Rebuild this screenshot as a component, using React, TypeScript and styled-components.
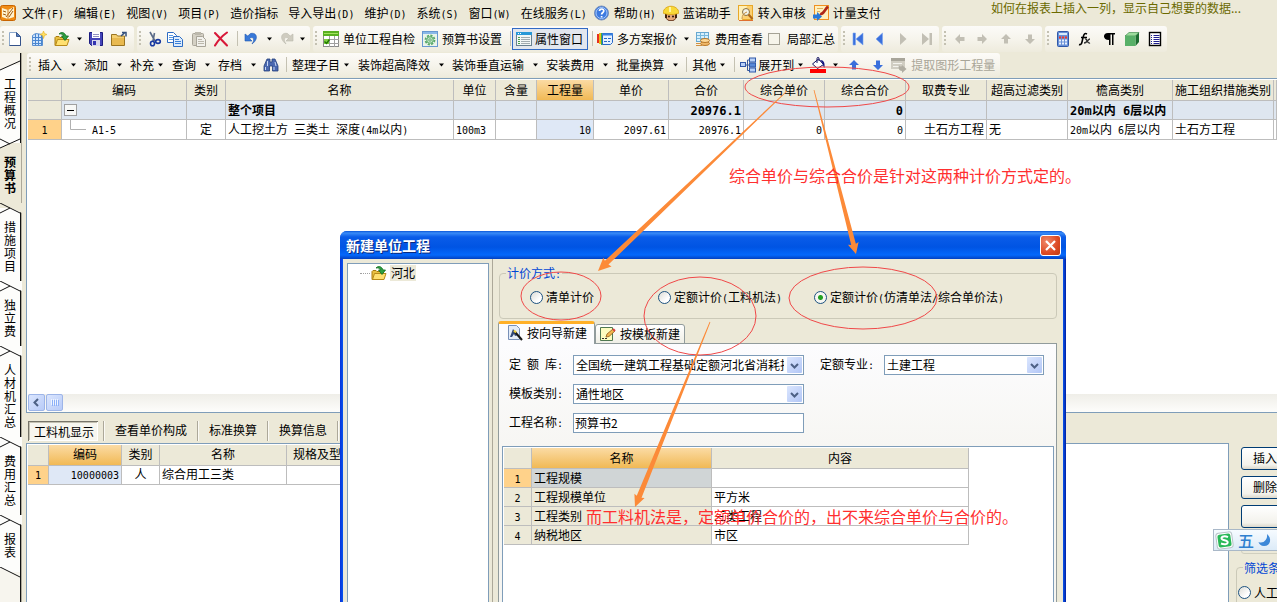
import React from "react";
import styled, { createGlobalStyle, css } from "styled-components";

const face = "#ece9d8";
const line = "#bdbdbd";
const edge = "#7f9db9";
const cjk = '"Noto Sans CJK SC", sans-serif';

const Global = createGlobalStyle`
  *, *::before, *::after { box-sizing: border-box; }
  html, body, #root { height: 100%; }
  body {
    margin: 0;
    overflow: hidden;
    background: ${face};
    color: #000;
    font: 12px/16px ${cjk};
  }
  button, input, select { font: inherit; color: inherit; margin: 0; }
  button { border: 0; background: none; padding: 0; white-space: nowrap; }
  fieldset { margin: 0; padding: 0; min-width: 0; }
`;

/* ---------- text ---------- */

const Latin = styled.span`
  font-family: "DejaVu Sans Mono", monospace;
  font-size: 10px;
  line-height: 10px;
  white-space: pre;
`;

const T = ({ s }: { s: string }) => (
  <span>
    {s.split(/([\x20-\x7e]+)/).map((part, i) => (i % 2 ? <Latin key={i}>{part}</Latin> : part))}
  </span>
);

/* ---------- icons ---------- */

const Svg = styled.svg`
  display: block;
  flex: none;
`;

const Icon = ({ children }: { children: React.ReactNode }) => (
  <Svg width="16" height="16" viewBox="0 0 16 16" fill="none" aria-hidden="true">
    {children}
  </Svg>
);

const AppIcon = () => (
  <Icon>
    <rect x="0.5" y="0.5" width="15" height="15" rx="2" fill="#f08c14" stroke="#c86400" />
    <path d="M2 3 8 5l6-3v10l-6 2-6-2z" fill="#fff3d0" />
    <path d="M3 6l3 1M3 9l3 1M6 12l7-9M9 12l4-6" stroke="#a05a10" />
    <path d="M8 5v9" stroke="#d07a20" />
  </Icon>
);
const NewDoc = () => (
  <Icon>
    <path d="M2.500 1.500h7l4 4v9h-11z" fill="#fff" stroke="#8ca8cc" />
    <path d="M9.500 1.500v4h4z" fill="#5a7fc0" stroke="#3a5a90" />
    <path d="M13.500 6v8.500h-11" stroke="#34528a" />
  </Icon>
);
const Building = () => (
  <Icon>
    <path d="M1.500 4.500l3-2 7 1v11h-10z" fill="#cfe4fb" stroke="#5a8fd0" />
    <path d="M4.500 3v11M7.500 3v11M10.500 4v10M2 6.500h9M2 9.500h9M2 12.500h9" stroke="#4a86d0" />
    <path d="M12.500 0l1 2.500L16 3.500l-2.500 1-1 3-1-3-2.500-1 2.500-1z" fill="#ffe060" stroke="#e8b020" strokeWidth="0.600" />
  </Icon>
);
const OpenFolder = () => (
  <Icon>
    <path d="M1 6.500l1-1h3l1 1h6v3H5l-2 5H1z" fill="#e8c040" stroke="#a87a10" />
    <path d="M3.500 8.500h11.500l-2 6H1.500z" fill="#ffe070" stroke="#b88a18" />
    <path d="M5 3c3-3 6-1 7 2h2.500L11 9.500 7.500 5H9.500C9 3.500 7.500 2.500 5 3z" fill="#2fa040" stroke="#0e6c20" strokeWidth="0.800" />
  </Icon>
);
const Save = () => (
  <Icon>
    <path d="M1.500 1.500h13v13h-11l-2-2z" fill="#4444b8" stroke="#1c1c80" />
    <rect x="4" y="1" width="8" height="6" fill="#fff" />
    <path d="M5 3.500h6M5 5.500h6" stroke="#9090c0" />
    <rect x="4" y="9" width="8" height="6" fill="#d8d8ec" />
    <rect x="5" y="10" width="3" height="4" fill="#3434b0" />
  </Icon>
);
const FolderUp = () => (
  <Icon>
    <path d="M.5 3.500h5l1 1.500h7v9.500H.5z" fill="#f4cf70" stroke="#9a7420" />
    <path d="M1 7h12v7H1z" fill="#e8b950" />
    <path d="M10 5l4-3.500M11 1.500h4v4" stroke="#34507c" strokeWidth="1.500" />
  </Icon>
);
const Cut = () => (
  <Icon>
    <path d="M4 1l5 9M8.500 2L7 10" stroke="#5a6a88" strokeWidth="1.600" />
    <ellipse cx="6.500" cy="12.500" rx="2" ry="2.300" stroke="#1838a0" strokeWidth="1.600" />
    <ellipse cx="12" cy="10.500" rx="2.300" ry="1.900" stroke="#1838a0" strokeWidth="1.600" />
  </Icon>
);
const Copy = () => (
  <Icon>
    <path d="M.5 1.500h6l3 3v7h-9z" fill="#fff" stroke="#2d6cc4" />
    <path d="M2 4.500h4M2 6.500h5M2 8.500h4" stroke="#5a98e0" />
    <path d="M6.500 5.500h6l3 3v7h-9z" fill="#dcebfc" stroke="#2d6cc4" />
    <path d="M8 8.500h4M8 10.500h6M8 12.500h6" stroke="#3a80d8" />
  </Icon>
);
const Paste = () => (
  <Icon>
    <rect x="1.500" y="2.500" width="11" height="12" rx="1" fill="#d4d0c4" stroke="#a8a498" />
    <rect x="4" y="1" width="6" height="3" fill="#bcb8ac" />
    <path d="M5.500 5.500h6l3 3v7h-9z" fill="#f2f1ec" stroke="#a8a498" />
    <path d="M7 8.500h4M7 10.500h6M7 12.500h6" stroke="#bcb8ac" />
  </Icon>
);
const Delete = () => (
  <Icon>
    <path d="M2 2l12 12.500M14 1.500C9 5 5 9.500 2 14.500" stroke="#d81838" strokeWidth="2.100" strokeLinecap="round" />
  </Icon>
);
const Undo = () => (
  <Icon>
    <path d="M2 3v7h7L6.500 7.500C10 5 12.500 8 9 13c7-5 5-12-1.500-10.500L4.800 5z" fill="#3878d8" stroke="#2058b0" strokeWidth="0.600" />
  </Icon>
);
const Redo = () => (
  <Icon>
    <path d="M14 3v7H7l2.500-2.500C6 5 3.500 8 7 13 0 8 2 1 8.500 2.500L11.200 5z" fill="#cfccc0" stroke="#bbb8ac" strokeWidth="0.600" />
  </Icon>
);
const Check = () => (
  <Icon>
    <rect x="0.500" y="0.500" width="15" height="15" fill="#fff" stroke="#8a8a8a" />
    <rect x="0" y="0" width="16" height="5" fill="#58b020" />
    <path d="M1 2.500h14" stroke="#a4e060" />
    <path d="M1 8.500h15M1 12.500h15M6.500 5v11M11.500 5v11" stroke="#a0a0a0" />
    <path d="M1 8h5v5H1z" fill="#80d040" />
    <path d="M1.500 10.500l2 2 3-4" stroke="#207800" strokeWidth="1.400" />
  </Icon>
);
const Gear = () => (
  <Icon>
    <rect x="0.500" y="0.500" width="15" height="15" fill="#eaf4ea" stroke="#6898d0" />
    <path d="M1 2h14" stroke="#8ab8e8" strokeWidth="2" />
    <circle cx="8" cy="9" r="4.500" stroke="#58a868" strokeWidth="1.800" strokeDasharray="2.200 1.300" />
    <circle cx="8" cy="9" r="3.300" fill="#c4e6c8" stroke="#58a868" />
    <circle cx="8" cy="9" r="1.200" fill="#fff" stroke="#58a868" />
  </Icon>
);
const PropWindow = () => (
  <Icon>
    <rect x="0.500" y="1.500" width="15" height="13" fill="#f2f6f6" stroke="#688090" />
    <rect x="0" y="1" width="16" height="3" fill="#2898d8" />
    <path d="M2 2.500h1M4 2.500h1" stroke="#fff" />
    <path d="M2 6.500h2M2 8.500h2M2 10.500h2M2 12.500h2" stroke="#48a048" />
    <path d="M5 6.500h9M5 8.500h9M5 10.500h9M5 12.500h9" stroke="#a0aab0" />
  </Icon>
);
const Quote = () => (
  <Icon>
    <rect x="0" y="3" width="2" height="9" fill="#e83020" />
    <rect x="2" y="2" width="2" height="11" fill="#f0b818" />
    <rect x="4" y="2" width="2" height="12" fill="#38b048" />
    <path d="M5.500 2.500h10v9l-2 2h-8z" fill="#e4f0fe" stroke="#2868c8" />
    <path d="M5 3.500h11" stroke="#3880e0" strokeWidth="2" />
    <path d="M7 7.500h3M11 7.500h3M7 10.500h3M11 10.500h2" stroke="#2868c8" />
  </Icon>
);
const Cost = () => (
  <Icon>
    <rect x="1.500" y="1.500" width="12" height="9" fill="#d8f0fc" stroke="#68a8d0" />
    <path d="M2 4.500h11M2 7.500h11M5.500 2v8M9.500 2v8" stroke="#78b8dc" />
    <ellipse cx="10" cy="12.500" rx="4.500" ry="2" fill="#f0b868" stroke="#b87828" />
    <ellipse cx="10" cy="9.500" rx="4.500" ry="2" fill="#fcd898" stroke="#b87828" />
    <path d="M1 12.500h4M1 14.500h6" stroke="#d09040" />
  </Icon>
);
const blueFill = "#3a6fdc";
const greyFill = "#c2bfb4";
const First = () => (
  <Icon>
    <path d="M3 2h2.500v12H3zM13 2v12L6 8z" fill={blueFill} stroke="#7aa4f0" strokeWidth="0.600" />
  </Icon>
);
const Prev = () => (
  <Icon>
    <path d="M11.500 2v12L5 8z" fill={blueFill} stroke="#7aa4f0" strokeWidth="0.600" />
  </Icon>
);
const Next = () => (
  <Icon>
    <path d="M5 2v12l6.500-6z" fill={greyFill} />
  </Icon>
);
const Last = () => (
  <Icon>
    <path d="M3 2v12l7-6zM10.500 2H13v12h-2.500z" fill={greyFill} />
  </Icon>
);
const Arrow = ({ turn, fill = greyFill }: { turn: number; fill?: string }) => (
  <Icon>
    <path transform={`rotate(${turn} 8 8)`} d="M8 3l5 5h-3v4.500H6V8H3z" fill={fill} />
  </Icon>
);
const Calculator = () => (
  <Icon>
    <rect x="2.500" y="0.500" width="11" height="15" rx="1" fill="#6890d8" stroke="#3058a8" />
    <rect x="4" y="2" width="8" height="2" fill="#d8ecfc" />
    <path d="M4 6.500h2M7 6.500h2M10 6.500h2" stroke="#f03828" strokeWidth="2" />
    <path d="M4 9.500h2M7 9.500h2M10 9.500h2M4 12.500h2M7 12.500h2M10 12.500h2" stroke="#e8f0fc" strokeWidth="2" />
  </Icon>
);
const Fx = () => (
  <Icon>
    <path d="M2 13.500c3 1 3-3 4-7s2-4.500 4-3.500M4 6.500h6" stroke="#000" strokeWidth="1.600" />
    <path d="M8 8c2-1 2 5 5 4M13 8c-2 0-3 4-6 4" stroke="#303030" strokeWidth="1.400" />
  </Icon>
);
const Pilcrow = () => (
  <Icon>
    <path d="M7 2h7v1.500h-1.500V14H11V3.500H9.500V14H8V9C1.500 9 1.500 2 7 2z" fill="#000" />
  </Icon>
);
const Cube = () => (
  <Icon>
    <path d="M1 5l4-3.500h10L11.500 5z" fill="#9cdc9c" stroke="#308040" strokeWidth="0.600" />
    <path d="M11.500 5L15 1.500V11l-3.500 4z" fill="#1c6c30" />
    <rect x="1" y="5" width="10.500" height="10" fill="#58b068" />
  </Icon>
);
const Report = () => (
  <Icon>
    <rect x="2.500" y="1.500" width="11" height="13" fill="#fff" stroke="#000" strokeWidth="1.400" />
    <path d="M4 4.500h1M6.500 4.500h6M4 6.500h1M6.500 6.500h6M4 8.500h1M6.500 8.500h6M4 10.500h1M6.500 10.500h6M4 12.500h1M6.500 12.500h6" stroke="#202090" />
  </Icon>
);
const Binoculars = () => (
  <Icon>
    <path d="M4 2h3v3h2V2h3l3 7v5H9.500V9h-3v5H1V9z" fill="#4a68b0" stroke="#24407c" strokeWidth="0.800" />
    <path d="M2.500 10v3M4.500 4v5M11 10v3M12 5l1 4" stroke="#c8d8f4" />
  </Icon>
);
const Tree = () => (
  <Icon>
    <path d="M5 8h4M7.500 3v10.500M7.500 3H10M7.500 13.500H10" stroke="#385898" />
    <rect x="0.500" y="5.500" width="5" height="4" fill="#b8d0f8" stroke="#3058a8" />
    <rect x="9.500" y="1" width="6" height="4" fill="#b8d0f8" stroke="#3058a8" />
    <rect x="9.500" y="6" width="6" height="4" fill="#5888d8" stroke="#3058a8" />
    <rect x="9.500" y="11" width="6" height="4" fill="#b8d0f8" stroke="#3058a8" />
  </Icon>
);
const Paint = () => (
  <Icon>
    <path d="M2.500 7l6-5 5 5.500-6 4z" fill="#fff" stroke="#101060" />
    <path d="M7 6V1.500c0-1.500 2-1.500 2 0V4" stroke="#101060" />
    <path d="M10 3c4 0 5 3 4.500 8C13 10 13.500 8 12.500 6z" fill="#101080" />
    <rect x="0" y="12" width="16" height="4" fill="#f00" />
  </Icon>
);
const Extract = () => (
  <Icon>
    <rect x="0" y="1" width="14" height="11" fill="#d0cdc2" />
    <rect x="0" y="1" width="14" height="3" fill="#a8a59a" />
    <path d="M2 6.500h9M2 9.500h7" stroke="#f4f3ee" />
    <path d="M8 8c1 2 3 2 3 0l4.500 4L11 16v-2c-3 0-4-3-3-6z" fill="#b0ada2" />
  </Icon>
);
const Help = () => (
  <Icon>
    <circle cx="7.500" cy="8" r="7" fill="#3c7ae0" stroke="#7890b8" />
    <circle cx="7.500" cy="8" r="5.500" stroke="#a8c8f8" />
    <path d="M5.500 6c0-2.800 4.500-2.500 4.300 0C9.700 7.500 7.600 7.600 7.600 9.500M7.600 11v1.500" stroke="#fff" strokeWidth="1.700" />
  </Icon>
);
const Helper = () => (
  <Icon>
    <path d="M3 8h10v4c0 5-10 5-10 0z" fill="#e8a878" stroke="#603018" />
    <path d="M3 8v5M13 8v5" stroke="#402010" strokeWidth="2" />
    <path d="M0 8C1-1 15-1 16 8c-4 2-12 2-16 0z" fill="#f8d838" stroke="#d8a010" strokeWidth="0.800" />
    <path d="M7 2v5" stroke="#fff4a0" strokeWidth="2" />
    <circle cx="6" cy="11.500" r="1" fill="#201008" />
    <circle cx="10" cy="11.500" r="1" fill="#201008" />
  </Icon>
);
const Review = () => (
  <Icon>
    <rect x="0.500" y="0.500" width="14" height="14" fill="#fcd070" stroke="#e8a828" />
    <path d="M1 1h8L4 15H1z" fill="#fff0b8" />
    <circle cx="8" cy="7" r="3.500" fill="#f4f4e8" stroke="#887040" />
    <path d="M10.500 9.500l4 4.500" stroke="#b06818" strokeWidth="2.200" />
    <path d="M4 14c0-4 2-6 5-7" stroke="#c89040" />
    <path d="M1 15.500h14" stroke="#e07030" />
  </Icon>
);
const Payment = () => (
  <Icon>
    <rect x="1.500" y="0.500" width="14" height="14" fill="#fff0bc" stroke="#f09020" />
    <path d="M4 3.500h6M4 6.500h3" stroke="#e0b060" />
    <path d="M7 8.500c3 2 4-3 8-7" stroke="#b02818" strokeWidth="2.600" />
    <path d="M0 9.500h4V7l5 4.500L4 16v-2.500H0z" fill="#2878d8" />
  </Icon>
);
const Wizard = () => (
  <Icon>
    <path d="M1.500.5h8l3 3v11h-11z" fill="#e4ecf8" stroke="#7890b8" />
    <path d="M3 12l3-8 5 6-3 1-1-2-2 3z" fill="#304878" />
    <path d="M8 7l7 8" stroke="#181818" strokeWidth="2" />
    <path d="M7 5.500l2 2" stroke="#f0d040" strokeWidth="2" />
  </Icon>
);
const Template = () => (
  <Icon>
    <path d="M.5 1.500h12v13H.5z" fill="#fcfcc0" stroke="#507850" />
    <path d="M2 12.500h2M5 12.500h2" stroke="#303030" />
    <path d="M6 11l1-3 6-5 2 2-6 5.500z" fill="#f0b850" stroke="#905818" strokeWidth="0.800" />
    <path d="M13 3l2 2" stroke="#d84040" strokeWidth="2" />
  </Icon>
);

/* ---------- menu bar ---------- */

const Shell = styled.div`
  position: relative;
  display: flex;
  flex-direction: column;
  height: 100vh;
  overflow: hidden;
`;

const MenuBar = styled.nav`
  display: flex;
  align-items: center;
  flex: none;
  gap: 10px;
  height: 26px;
  padding-bottom: 1px;
  white-space: nowrap;
`;

const MenuItem = styled.button<{ $icon?: boolean }>`
  display: flex;
  align-items: center;
  gap: 4px;
  margin-left: ${(p) => (p.$icon ? -3 : 0)}px;
`;

const Logo = styled.span`
  margin-right: -4px;
`;

const Notice = styled.a`
  align-self: flex-start;
  margin: 0 36px 0 auto;
  color: #6b6a00;
  text-decoration: none;
`;

const menus: { label: string; icon?: React.ReactNode }[] = [
  { label: "文件(F)" },
  { label: "编辑(E)" },
  { label: "视图(V)" },
  { label: "项目(P)" },
  { label: "造价指标" },
  { label: "导入导出(D)" },
  { label: "维护(D)" },
  { label: "系统(S)" },
  { label: "窗口(W)" },
  { label: "在线服务(L)" },
  { label: "帮助(H)", icon: <Help /> },
  { label: "蓝诺助手", icon: <Helper /> },
  { label: "转入审核", icon: <Review /> },
  { label: "计量支付", icon: <Payment /> },
];

/* ---------- toolbars ---------- */

const ToolRow = styled.div`
  display: flex;
  flex: none;
  gap: 3px;
  height: 27px;
  white-space: nowrap;
`;

const ToolGroup = styled.div`
  display: flex;
  align-items: center;
  flex: none;
  height: 26px;
  padding-bottom: 1px;
  border-radius: 3px;
  background: linear-gradient(#fcfbf8, #f6f4ec 50%, #eeebdd);
`;

const Handle = styled.i<{ $w?: number }>`
  flex: none;
  width: ${(p) => p.$w ?? 8}px;
  height: 16px;
  background: linear-gradient(#c4c1b2, #c4c1b2) 2px 0 / 2px 2px no-repeat,
    linear-gradient(#c4c1b2, #c4c1b2) 2px 4px / 2px 2px no-repeat,
    linear-gradient(#c4c1b2, #c4c1b2) 2px 8px / 2px 2px no-repeat,
    linear-gradient(#c4c1b2, #c4c1b2) 2px 12px / 2px 2px no-repeat;
`;

const Slot = styled.button<{ $w: number }>`
  display: flex;
  flex: none;
  align-items: center;
  justify-content: center;
  width: ${(p) => p.$w}px;
  height: 22px;
`;

const Rule = styled.i<{ $w: number }>`
  display: flex;
  flex: none;
  justify-content: center;
  width: ${(p) => p.$w}px;
  height: 15px;
  &::before {
    content: "";
    width: 1px;
    background: #c4c1b2;
  }
`;

const Labelled = styled.button<{ $after?: number; $active?: boolean; $dim?: boolean }>`
  display: flex;
  flex: none;
  align-items: center;
  gap: 4px;
  height: 22px;
  margin-right: ${(p) => p.$after ?? 0}px;
  ${(p) => p.$dim && "color: #a9a698;"}
  ${(p) =>
    p.$active &&
    css`
      gap: 3px;
      padding: 0 4px 0 3px;
      border: 1px solid #316ac5;
      background: #e2e6ee;
    `}
`;

const CheckLabel = styled.label`
  display: flex;
  align-items: center;
  gap: 7px;
  padding-right: 3px;
  input {
    appearance: none;
    width: 12px;
    height: 12px;
    border: 1px solid #a5a295;
    background: #f6f4ea;
  }
`;

const Caret = () => (
  <Svg width="7" height="4" viewBox="0 0 7 4" aria-hidden="true">
    <path d="M1 0.500h5L3.500 3.500z" fill="currentColor" />
  </Svg>
);

const DropText = styled.button<{ $tight?: boolean; $after?: number }>`
  display: flex;
  flex: none;
  align-items: center;
  height: 22px;
  padding-right: ${(p) => p.$after ?? (p.$tight ? 8 : 7)}px;
  svg:last-child {
    margin-left: ${(p) => (p.$tight ? 3 : 8)}px;
  }
  svg + span {
    margin-left: 2px;
  }
`;

/* ---------- body ---------- */

const Body = styled.div`
  display: flex;
  flex: 1;
  min-height: 0;
`;

const Side = styled.nav`
  flex: none;
  width: 26px;
  padding-top: 12px;
  background: linear-gradient(90deg, #f7f5ee 20px, #111 20px, #111 21px, #aca899 21px, #aca899 22px, ${face} 22px);
`;

const SideTab = styled.button<{ $on?: boolean }>`
  position: relative;
  display: block;
  width: ${(p) => (p.$on ? 21 : 20)}px;
  padding: 12px 4px 14px;
  text-align: left;
  line-height: 13px;
  font-weight: ${(p) => (p.$on ? 700 : 400)};
  background: ${(p) => (p.$on ? face : "#fdfdfb")};
  span {
    display: block;
    width: 12px;
    white-space: normal;
    word-break: break-all;
  }
`;

const Notch = styled.svg`
  position: absolute;
  left: 0;
  top: -5px;
  z-index: 1;
`;

const SideEnd = styled.div`
  position: relative;
`;

const sideTabs = ["工程概况", "预算书", "措施项目", "独立费", "人材机汇总", "费用汇总", "报表"];

const Main = styled.main`
  display: flex;
  flex: 1;
  flex-direction: column;
  min-width: 0;
`;

const SubTools = styled(ToolRow)`
  height: 25px;
  padding-left: 1px;
  ${ToolGroup} {
    height: 24px;
  }
`;

const UpperPane = styled.section`
  display: flex;
  flex: 334 1 0;
  flex-direction: column;
  min-height: 0;
  padding: 1px 0 0 1px;
  border: solid ${edge};
  border-width: 1px 0 1px 1px;
  background: #fff;
`;

const Sheet = styled.table`
  table-layout: fixed;
  border-spacing: 0;
  white-space: nowrap;
`;

const FullSheet = styled(Sheet)`
  width: 100%;
`;

const cell = css`
  height: 19px;
  padding: 0 2px 1px;
  overflow: hidden;
  border: solid ${line};
  border-width: 0 1px 1px 0;
  line-height: 16px;
`;

const orange = "linear-gradient(#fbdba4, #f1b955)";

const Th = styled.th<{ $hot?: boolean }>`
  ${cell}
  height: 21px;
  padding: 0 0 1px;
  font-weight: 400;
  text-align: center;
  background: ${(p) => (p.$hot ? orange : face)};
`;

const RowNo = styled.th<{ $hot?: boolean }>`
  ${cell}
  font-weight: 400;
  text-align: center;
  background: ${(p) => (p.$hot ? "#ffd28a" : face)};
`;

const Td = styled.td<{ $align?: "right" | "center"; $bg?: string }>`
  ${cell}
  text-align: ${(p) => p.$align ?? "left"};
  background: ${(p) => p.$bg ?? "#fff"};
`;

const TotalRow = styled.tr`
  font-weight: 700;
  td {
    background: #dee6f0;
  }
  ${Latin} {
    font-size: 12px;
    line-height: 12px;
  }
`;

const TreeCell = styled.div`
  display: flex;
  align-items: center;
  gap: 6px;
`;

const upperCols: [string, number][] = [
  ["", 34],
  ["编码", 125],
  ["类别", 39],
  ["名称", 228],
  ["单位", 42],
  ["含量", 41],
  ["工程量", 57],
  ["单价", 75],
  ["合价", 75],
  ["综合单价", 81],
  ["综合合价", 81],
  ["取费专业", 81],
  ["超高过滤类别", 81],
  ["檐高类别", 105],
  ["施工组织措施类别", 101],
];

const ScrollTrack = styled.div`
  display: flex;
  gap: 1px;
  height: 18px;
  margin-top: auto;
  background: linear-gradient(#efeee8, #fdfdfb);
`;

const ScrollPiece = styled.button`
  display: grid;
  place-items: center;
  width: 17px;
  height: 17px;
  border: 1px solid #9db5e8;
  border-radius: 2px;
  background: linear-gradient(135deg, #dbe6fe, #b8cbf8);
`;

const TabStrip = styled.div`
  display: flex;
  flex: none;
  align-items: flex-end;
  height: 30px;
  padding: 0 0 2px 2px;
`;

const StripTab = styled.button<{ $on?: boolean }>`
  height: 20px;
  padding: 0 10px 2px;
  ${(p) =>
    p.$on &&
    css`
      padding: 1px 4px 0 5px;
      margin-right: 5px;
      border: solid #77756a;
      border-width: 1px 0 0 1px;
      background: #f7f6ef;
      box-shadow: inset -1px -1px #fff, inset 1px 1px #c4c1b2;
    `}
`;

const StripRule = styled.i`
  width: 2px;
  height: 20px;
  border-left: 1px solid #aca899;
  border-right: 1px solid #fbfaf4;
`;

const LowerArea = styled.section`
  display: flex;
  flex: 160 1 0;
  min-height: 0;
`;

const LowerGrid = styled.div`
  flex: 1;
  min-width: 0;
  padding: 1px 0 0 1px;
  border: solid ${edge};
  border-width: 1px 1px 0 1px;
  background: #fff;
`;

const Actions = styled.aside`
  display: flex;
  flex: none;
  flex-direction: column;
  gap: 6px;
  width: 48px;
  padding: 4px 0 0 12px;
  overflow: hidden;
`;

const XpButton = styled.button`
  flex: none;
  width: 75px;
  height: 23px;
  padding-left: 11px;
  text-align: left;
  border: 1px solid #003c74;
  border-radius: 3px;
  background: linear-gradient(#fff, #f3f2ec 80%, #dcd8cb);
`;

const ButtonFrame = styled.div`
  flex: none;
  width: 75px;
  height: 20px;
  border: 1px solid #d0cfbf;
  border-radius: 3px;
`;

const Group = styled.fieldset`
  border: 1px solid #cbc9b8;
  border-radius: 4px;
  legend {
    height: 16px;
    margin-left: 6px;
    padding: 0 1px;
    color: #0046d5;
  }
`;

const FilterGroup = styled(Group)`
  flex: none;
  width: 90px;
  margin-left: -5px;
  white-space: nowrap;
  label {
    margin: 9px 0 20px 1px;
  }
`;

const RadioLabel = styled.label`
  display: flex;
  align-items: center;
  gap: 3px;
`;

const Radio = styled.input.attrs({ type: "radio" })`
  appearance: none;
  flex: none;
  width: 13px;
  height: 13px;
  border: 1px solid #1d5281;
  border-radius: 50%;
  background: linear-gradient(135deg, #dcdcd6, #fff 70%);
  &:checked {
    background: radial-gradient(circle, #21a121 2px, #f6f6f2 3px);
  }
`;

/* ---------- dialog ---------- */

const Dialog = styled.section`
  position: absolute;
  left: 340px;
  top: 231px;
  bottom: -4px;
  display: flex;
  flex-direction: column;
  width: 726px;
  padding: 0 3px;
  border-radius: 7px 7px 0 0;
  background: linear-gradient(90deg, #0831d9, #0855ee 3px, #0855ee 723px, #001ea0);
`;

const TitleBar = styled.header`
  display: flex;
  flex: none;
  align-items: center;
  justify-content: space-between;
  height: 28px;
  margin: 0 -3px;
  padding: 0 5px 0 6px;
  border-radius: 7px 7px 0 0;
  background: linear-gradient(#0a55d8, #3a8cf8 2px, #0a5ce8 6px, #0054e3 16px, #0468fb 24px, #0340c0);
  color: #fff;
  h1 {
    margin: 0;
    font-size: 14px;
    line-height: 18px;
    text-shadow: 1px 1px #0a2a80;
  }
`;

const Close = styled.button`
  display: grid;
  place-items: center;
  width: 21px;
  height: 21px;
  border: 1px solid #fff;
  border-radius: 3px;
  background: radial-gradient(circle at 30% 30%, #f0886a, #dc4a24 60%, #c03a10);
`;

const DialogBody = styled.div`
  display: flex;
  flex: 1;
  min-height: 0;
  background: ${face};
`;

const TreeBox = styled.div`
  flex: none;
  width: 142px;
  margin: 4px 3px 0 4px;
  border: 1px solid ${edge};
  background: #fff;
`;

const TreeNode = styled.div`
  display: flex;
  align-items: center;
  margin-top: 1px;
  padding-left: 12px;
  &::before {
    content: "";
    width: 10px;
    margin-right: 1px;
    border-top: 1px dotted #a0a0a0;
  }
  span {
    margin-left: 3px;
    padding: 0 1px;
    background: ${face};
  }
`;

const Right = styled.div`
  display: flex;
  flex: 1;
  flex-direction: column;
  min-width: 0;
  padding: 6px 6px 0 5px;
  border-left: 1px solid #aca899;
`;

const Pricing = styled(Group)`
  flex: none;
  height: 54px;
  margin-left: 1px;
`;

const Choices = styled.div`
  display: grid;
  grid-template-columns: 128px 156px auto;
  padding: 8px 0 0 30px;
  white-space: nowrap;
`;

const Tabs = styled.div`
  display: flex;
  flex: none;
  align-items: flex-end;
  height: 25px;
  margin-bottom: -1px;
`;

const Tab = styled.button<{ $on?: boolean }>`
  display: flex;
  align-items: center;
  gap: 4px;
  height: 20px;
  padding: 0 4px;
  border: 1px solid #919b9c;
  border-radius: 3px 3px 0 0;
  background: linear-gradient(#fff, #f0efe6);
  ${(p) =>
    p.$on &&
    css`
      z-index: 1;
      height: 23px;
      padding: 0 7px 2px 8px;
      border-top: 3px solid #ffb028;
      border-bottom: 0;
      background: #fcfcfe;
    `}
`;

const Pane = styled.div`
  display: flex;
  flex: 1;
  flex-direction: column;
  padding: 11px 2px 0 3px;
  border: 1px solid #919b9c;
  background: linear-gradient(#fcfcfe, #f6f5f1 120px);
`;

const Form = styled.form`
  display: flex;
  flex-direction: column;
  gap: 9px;
  margin: 0 0 13px 7px;
`;

const FormRow = styled.div`
  display: flex;
  align-items: center;
  height: 20px;
`;

const FormLabel = styled.label<{ $gap?: number }>`
  flex: none;
  width: 64px;
  margin-left: ${(p) => p.$gap ?? 0}px;
  padding-bottom: 2px;
  white-space: pre;
`;

const field = css`
  display: block;
  width: 100%;
  height: 20px;
  border: 1px solid ${edge};
  border-radius: 0;
  background: #fff;
  outline: 0;
  line-height: 18px;
`;

const Field = styled.div<{ $w: number }>`
  position: relative;
  width: ${(p) => p.$w}px;
`;

const Select = styled.select`
  ${field}
  appearance: none;
  padding: 0 19px 0 2px;
`;

const Input = styled.input`
  ${field}
  padding: 0 1px 2px;
`;

const Drop = styled.span`
  position: absolute;
  top: 2px;
  right: 2px;
  display: grid;
  place-items: center;
  width: 15px;
  height: 16px;
  border-radius: 1px;
  background: linear-gradient(135deg, #dbe6fe, #b2c6f6);
  pointer-events: none;
`;

const Chevron = ({ turn = 0 }: { turn?: number }) => (
  <Svg width="9" height="9" viewBox="0 0 9 9" fill="none" aria-hidden="true">
    <path d="M1 3l3.500 3.500L8 3" stroke="#4d6185" strokeWidth="2" transform={`rotate(${turn} 4.500 4.500)`} />
  </Svg>
);

const SelectBox = ({ id, w, value }: { id: string; w: number; value: string }) => (
  <Field $w={w}>
    <Select id={id} defaultValue={value}>
      <option>{value}</option>
    </Select>
    <Drop>
      <Chevron />
    </Drop>
  </Field>
);

const InnerGrid = styled.div`
  flex: 1;
  padding: 1px 0 0 1px;
  border: solid ${edge};
  border-width: 1px 1px 0 1px;
  background: #fff;
`;

const attributes = [
  ["工程规模", ""],
  ["工程规模单位", "平方米"],
  ["工程类别", "三类工程"],
  ["纳税地区", "市区"],
];

/* ---------- overlays ---------- */

const Ime = styled.div`
  position: absolute;
  right: 0;
  top: 529px;
  display: flex;
  align-items: center;
  gap: 4px;
  width: 64px;
  height: 22px;
  padding-left: 1px;
  border: 1px solid #a9b8c8;
  border-right: 0;
  background: linear-gradient(#f6fbff, #dcebf8);
  color: #2f80d0;
  font-size: 16px;
  font-weight: 500;
`;

const Marks = styled.svg`
  position: absolute;
  inset: 0;
  width: 100%;
  height: 100%;
  pointer-events: none;
`;

const Remark = styled.p<{ $x: number; $y: number }>`
  position: absolute;
  left: ${(p) => p.$x}px;
  top: ${(p) => p.$y}px;
  margin: 0;
  color: #ff2f2f;
  font-size: 16px;
  line-height: 20px;
  white-space: nowrap;
  pointer-events: none;
`;

type Pt = [number, number];

/* A pointer that widens from its tail to the base of the head. */
const pointer = ([x0, y0]: Pt, [x1, y1]: Pt, head: number, half: number, shaft: number) => {
  const len = Math.hypot(x1 - x0, y1 - y0);
  const ux = (x1 - x0) / len;
  const uy = (y1 - y0) / len;
  const at = (d: number, side: number) => `${x0 + ux * d - uy * side},${y0 + uy * d + ux * side}`;
  const base = len - head;
  return [at(0, 0.4), at(base, shaft), at(base - 1, half), at(len, 0), at(base - 1, -half), at(base, -shaft), at(0, -0.4)].join(" ");
};

/* ---------- page ---------- */

export default function App() {
  return (
    <Shell>
      <Global />
      <MenuBar>
        <Logo>
          <AppIcon />
        </Logo>
        {menus.map((m) => (
          <MenuItem key={m.label} $icon={!!m.icon}>
            {m.icon}
            <T s={m.label} />
          </MenuItem>
        ))}
        <Notice href="#help">如何在报表上插入一列，显示自己想要的数据...</Notice>
      </MenuBar>

      <ToolRow>
        <ToolGroup>
          <Handle $w={6} />
          <Slot $w={18} aria-label="新建"><NewDoc /></Slot>
          <Slot $w={30} aria-label="新建项目"><Building /></Slot>
          <Slot $w={16} aria-label="打开"><OpenFolder /></Slot>
          <Slot $w={18} aria-label="打开列表"><Caret /></Slot>
          <Slot $w={16} aria-label="保存"><Save /></Slot>
          <Slot $w={30} aria-label="另存"><FolderUp /></Slot>
        </ToolGroup>
        <ToolGroup>
          <Handle />
          <Slot $w={18} aria-label="剪切"><Cut /></Slot>
          <Slot $w={24} aria-label="复制"><Copy /></Slot>
          <Slot $w={24} aria-label="粘贴"><Paste /></Slot>
          <Slot $w={20} aria-label="删除"><Delete /></Slot>
          <Rule $w={12} />
          <Slot $w={16} aria-label="撤销"><Undo /></Slot>
          <Slot $w={20} aria-label="撤销列表"><Caret /></Slot>
          <Slot $w={16} aria-label="重做"><Redo /></Slot>
          <Slot $w={15} aria-label="重做列表"><Caret /></Slot>
        </ToolGroup>
        <ToolGroup>
          <Handle $w={10} />
          <Labelled $after={7}><Check />单位工程自检</Labelled>
          <Labelled $after={7}><Gear />预算书设置</Labelled>
          <Rule $w={3} />
          <Labelled $active><PropWindow />属性窗口</Labelled>
          <Rule $w={9} />
          <Labelled><Quote />多方案报价</Labelled>
          <Slot $w={18} aria-label="报价列表"><Caret /></Slot>
          <Labelled $after={5}><Cost />费用查看</Labelled>
          <CheckLabel>
            <input type="checkbox" />
            局部汇总
          </CheckLabel>
        </ToolGroup>
        <ToolGroup>
          <Handle />
          <Slot $w={18} aria-label="首个"><First /></Slot>
          <Slot $w={24} aria-label="上一个"><Prev /></Slot>
          <Slot $w={24} aria-label="下一个"><Next /></Slot>
          <Slot $w={24} aria-label="末个"><Last /></Slot>
        </ToolGroup>
        <ToolGroup>
          <Handle />
          <Slot $w={20} aria-label="左移"><Arrow turn={-90} /></Slot>
          <Slot $w={24} aria-label="右移"><Arrow turn={90} /></Slot>
          <Slot $w={24} aria-label="上移"><Arrow turn={0} /></Slot>
          <Slot $w={24} aria-label="下移"><Arrow turn={180} /></Slot>
        </ToolGroup>
        <ToolGroup>
          <Handle />
          <Slot $w={20} aria-label="计算器"><Calculator /></Slot>
          <Slot $w={24} aria-label="函数"><Fx /></Slot>
          <Slot $w={24} aria-label="段落"><Pilcrow /></Slot>
          <Slot $w={22} aria-label="图形"><Cube /></Slot>
          <Slot $w={24} aria-label="报表"><Report /></Slot>
        </ToolGroup>
      </ToolRow>

      <Body>
        <Side>
          {sideTabs.map((name, i) => (
            <SideTab key={name} $on={i === 1}>
              <Notch width="22" height="11" viewBox="0 0 22 11" fill="none" aria-hidden="true">
                {i === 0 ? (
                  <>
                    <path d="M0 0h20L0 10z" fill="#f7f5ee" />
                    <path d="M0 10L20 1" stroke="#111" />
                  </>
                ) : i === 1 ? (
                  <>
                    <path d="M20 0v1L0 10V0z" fill="#fdfdfb" />
                    <path d="M0 1l10 5M0 10L20 1" stroke="#111" />
                  </>
                ) : (
                  <>
                    <path d="M0 0l22 10V0z" fill={i === 2 ? face : "#fdfdfb"} />
                    <path d="M0 0l20 10M10 5L0 10" stroke="#111" />
                  </>
                )}
              </Notch>
              <span>{name}</span>
            </SideTab>
          ))}
          <SideEnd>
            <Notch width="22" height="11" viewBox="0 0 22 11" fill="none" aria-hidden="true">
              <path d="M0 0v10h20z" fill="#f7f5ee" />
              <path d="M0 0l20 10" stroke="#111" />
            </Notch>
          </SideEnd>
        </Side>

        <Main>
          <SubTools>
            <ToolGroup>
              <Handle $w={11} />
              <DropText>插入<Caret /></DropText>
              <DropText>添加<Caret /></DropText>
              <DropText $tight>补充<Caret /></DropText>
              <DropText>查询<Caret /></DropText>
              <DropText $after={5}>存档<Caret /></DropText>
              <Slot $w={18} aria-label="查找"><Binoculars /></Slot>
              <Rule $w={12} />
              <DropText $tight>整理子目<Caret /></DropText>
              <DropText>装饰超高降效<Caret /></DropText>
              <DropText>装饰垂直运输<Caret /></DropText>
              <DropText>安装费用<Caret /></DropText>
              <DropText $after={1}>批量换算<Caret /></DropText>
              <Rule $w={12} />
              <DropText $tight $after={2}>其他<Caret /></DropText>
              <Rule $w={12} />
              <DropText $tight $after={5}>
                <Tree />
                <span>展开到</span>
                <Caret />
              </DropText>
              <Slot $w={18} aria-label="填充颜色"><Paint /></Slot>
              <Slot $w={16} aria-label="颜色列表"><Caret /></Slot>
              <Slot $w={22} aria-label="向上"><Arrow turn={0} fill={blueFill} /></Slot>
              <Slot $w={26} aria-label="向下"><Arrow turn={180} fill={blueFill} /></Slot>
              <Labelled $dim $after={5}><Extract />提取图形工程量</Labelled>
            </ToolGroup>
          </SubTools>

          <UpperPane>
            <FullSheet>
              <colgroup>
                {upperCols.map(([name, w]) => (
                  <col key={name} width={w} />
                ))}
                <col />
              </colgroup>
              <thead>
                <tr>
                  {upperCols.map(([name]) => (
                    <Th key={name} $hot={name === "工程量"}>{name}</Th>
                  ))}
                  <Th />
                </tr>
              </thead>
              <tbody>
                <TotalRow>
                  <RowNo />
                  <Td>
                    <Svg width="13" height="16" viewBox="0 0 13 16" fill="none" aria-hidden="true">
                      <rect x="0.500" y="2.500" width="12" height="11" fill="#f8f8f6" stroke="#a0a0a0" />
                      <path d="M3 8.500h7" stroke="#000" />
                    </Svg>
                  </Td>
                  <Td />
                  <Td>整个项目</Td>
                  <Td />
                  <Td />
                  <Td />
                  <Td />
                  <Td $align="right"><T s="20976.1" /></Td>
                  <Td />
                  <Td $align="right"><T s="0" /></Td>
                  <Td />
                  <Td />
                  <Td><T s="20m以内 6层以内" /></Td>
                  <Td />
                  <Td />
                </TotalRow>
                <tr>
                  <RowNo $hot><T s="1" /></RowNo>
                  <Td>
                    <TreeCell>
                      <Svg width="22" height="18" viewBox="0 0 22 18" fill="none" aria-hidden="true">
                        <path d="M6.500 0v9.500H22" stroke="#b0b0b0" />
                      </Svg>
                      <T s="A1-5" />
                    </TreeCell>
                  </Td>
                  <Td $align="center">定</Td>
                  <Td><T s="人工挖土方 三类土 深度(4m以内)" /></Td>
                  <Td><T s="100m3" /></Td>
                  <Td />
                  <Td $align="right" $bg="#dfe8f6"><T s="10" /></Td>
                  <Td $align="right"><T s="2097.61" /></Td>
                  <Td $align="right"><T s="20976.1" /></Td>
                  <Td $align="right"><T s="0" /></Td>
                  <Td $align="right"><T s="0" /></Td>
                  <Td $align="right">土石方工程</Td>
                  <Td>无</Td>
                  <Td><T s="20m以内 6层以内" /></Td>
                  <Td>土石方工程</Td>
                  <Td />
                </tr>
              </tbody>
            </FullSheet>
            <ScrollTrack>
              <ScrollPiece aria-label="向左滚动"><Chevron turn={90} /></ScrollPiece>
              <ScrollPiece aria-label="滑块">
                <Svg width="9" height="7" viewBox="0 0 9 7" aria-hidden="true">
                  <path d="M1.500 0v6M3.500 0v6M5.500 0v6M7.500 0v6" stroke="#eef4fe" />
                  <path d="M2.500 1v6M4.500 1v6M6.500 1v6M8.500 1v6" stroke="#8cb0f8" />
                </Svg>
              </ScrollPiece>
            </ScrollTrack>
          </UpperPane>

          <TabStrip>
            <StripTab $on>工料机显示</StripTab>
            <StripRule />
            <StripTab>查看单价构成</StripTab>
            <StripRule />
            <StripTab>标准换算</StripTab>
            <StripRule />
            <StripTab>换算信息</StripTab>
            <StripRule />
          </TabStrip>

          <LowerArea>
            <LowerGrid>
              <Sheet width={332}>
                <colgroup>
                  <col width={21} />
                  <col width={73} />
                  <col width={38} />
                  <col width={127} />
                  <col width={73} />
                </colgroup>
                <thead>
                  <tr>
                    <Th />
                    <Th $hot>编码</Th>
                    <Th>类别</Th>
                    <Th>名称</Th>
                    <Th>规格及型号</Th>
                  </tr>
                </thead>
                <tbody>
                  <tr>
                    <RowNo $hot><T s="1" /></RowNo>
                    <Td $align="right" $bg="#dfe8f6"><T s="10000003" /></Td>
                    <Td $align="center">人</Td>
                    <Td>综合用工三类</Td>
                    <Td />
                  </tr>
                </tbody>
              </Sheet>
            </LowerGrid>
            <Actions>
              <XpButton>插入</XpButton>
              <XpButton>删除</XpButton>
              <XpButton aria-label="更多" />
              <ButtonFrame />
              <FilterGroup>
                <legend>筛选条件</legend>
                <RadioLabel>
                  <Radio name="filter" />
                  人工
                </RadioLabel>
              </FilterGroup>
            </Actions>
          </LowerArea>
        </Main>
      </Body>

      <Dialog role="dialog" aria-labelledby="dialog-title">
        <TitleBar>
          <h1 id="dialog-title">新建单位工程</h1>
          <Close aria-label="关闭">
            <Svg width="13" height="13" viewBox="0 0 13 13" aria-hidden="true">
              <path d="M2 2l9 9M11 2l-9 9" stroke="#fff" strokeWidth="2.200" />
            </Svg>
          </Close>
        </TitleBar>
        <DialogBody>
          <TreeBox>
            <TreeNode>
              <OpenFolder />
              <span>河北</span>
            </TreeNode>
          </TreeBox>
          <Right>
            <Pricing>
              <legend>
                <T s="计价方式:" />
              </legend>
              <Choices>
                <RadioLabel>
                  <Radio name="pricing" />
                  清单计价
                </RadioLabel>
                <RadioLabel>
                  <Radio name="pricing" />
                  <T s="定额计价(工料机法)" />
                </RadioLabel>
                <RadioLabel>
                  <Radio name="pricing" defaultChecked />
                  <T s="定额计价(仿清单法/综合单价法)" />
                </RadioLabel>
              </Choices>
            </Pricing>
            <Tabs role="tablist">
              <Tab $on role="tab"><Wizard />按向导新建</Tab>
              <Tab role="tab"><Template />按模板新建</Tab>
            </Tabs>
            <Pane>
              <Form>
                <FormRow>
                  <FormLabel htmlFor="quota"><T s="定 额 库:" /></FormLabel>
                  <SelectBox id="quota" w={231} value="全国统一建筑工程基础定额河北省消耗指标" />
                  <FormLabel $gap={16} htmlFor="major"><T s="定额专业:" /></FormLabel>
                  <SelectBox id="major" w={160} value="土建工程" />
                </FormRow>
                <FormRow>
                  <FormLabel htmlFor="kind"><T s="模板类别:" /></FormLabel>
                  <SelectBox id="kind" w={231} value="通性地区" />
                </FormRow>
                <FormRow>
                  <FormLabel htmlFor="title"><T s="工程名称:" /></FormLabel>
                  <Field $w={231}>
                    <Input id="title" defaultValue="预算书2" />
                  </Field>
                </FormRow>
              </Form>
              <InnerGrid>
                <Sheet width={465}>
                  <colgroup>
                    <col width={28} />
                    <col width={180} />
                    <col width={257} />
                  </colgroup>
                  <thead>
                    <tr>
                      <Th />
                      <Th $hot>名称</Th>
                      <Th>内容</Th>
                    </tr>
                  </thead>
                  <tbody>
                    {attributes.map(([name, value], i) => (
                      <tr key={name}>
                        <RowNo $hot={i === 0}><T s={String(i + 1)} /></RowNo>
                        <Td $bg={i === 0 ? "#d0d5d6" : face}>{name}</Td>
                        <Td>{value}</Td>
                      </tr>
                    ))}
                  </tbody>
                </Sheet>
              </InnerGrid>
            </Pane>
          </Right>
        </DialogBody>
      </Dialog>

      <Ime>
        <Svg width="19" height="19" viewBox="0 0 19 19" fill="none" aria-hidden="true">
          <rect x="1.500" y="1.500" width="16" height="16" rx="3" fill="#fff" stroke="#b8c4c8" transform="rotate(-8 9.500 9.500)" />
          <rect x="3" y="3" width="13" height="13" rx="2" fill="#28b858" transform="rotate(-8 9.500 9.500)" />
          <path d="M13 6.200C10 4.800 6.500 5.200 6.500 7.300c0 2.600 6.200 1.200 6.200 3.900 0 2.300-3.900 2.500-6.700 1.300" stroke="#fff" strokeWidth="2" />
        </Svg>
        五
        <Svg width="14" height="14" viewBox="0 0 14 14" aria-hidden="true">
          <path d="M9 1c5 4 4 12-3 12-3 0-5-2-5.500-4C5 11 10 7 9 1z" fill="#3c88d8" />
        </Svg>
      </Ime>

      <Marks fill="none" aria-hidden="true">
        <g stroke="#f04848" strokeWidth="1">
          <ellipse cx="827" cy="87" rx="82" ry="20" />
          <ellipse cx="561" cy="296" rx="40" ry="24" />
          <ellipse cx="700" cy="316" rx="56" ry="39" />
          <ellipse cx="863" cy="298" rx="74" ry="31" />
        </g>
        <g fill="#fc8a38">
          <polygon points={pointer([787, 91], [598, 271], 12, 6, 2.6)} />
          <polygon points={pointer([814, 90], [856, 254], 10, 5.5, 2.4)} />
          <polygon points={pointer([710, 322], [635, 507], 11, 5.5, 2.6)} />
        </g>
      </Marks>
      <Remark $x={729} $y={165}>综合单价与综合合价是针对这两种计价方式定的。</Remark>
      <Remark $x={586} $y={506}>而工料机法是，定额单价合价的，出不来综合单价与合价的。</Remark>
    </Shell>
  );
}
